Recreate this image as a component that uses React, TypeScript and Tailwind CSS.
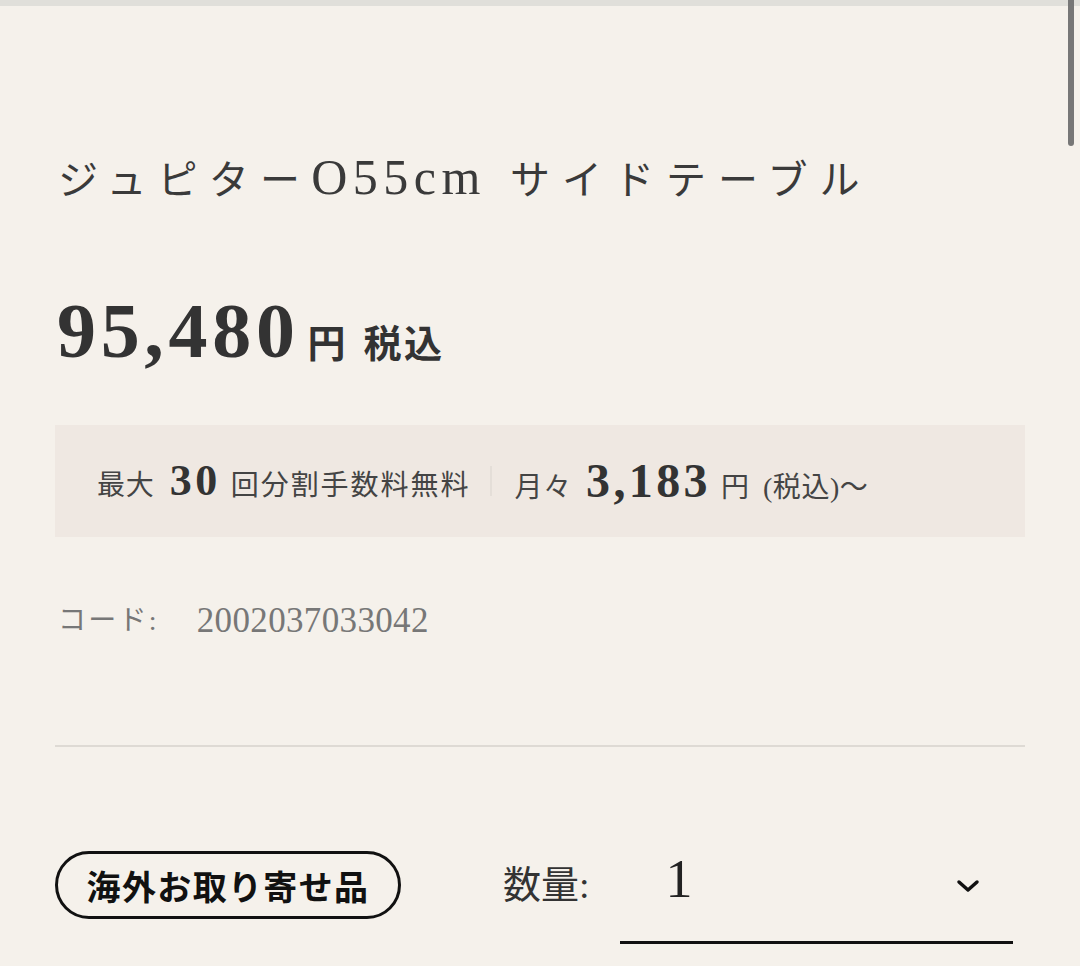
import React from 'react';

const serif = "font-['Liberation_Serif','Noto_Sans_CJK_JP',serif]";

const App: React.FC = () => {
  return (
    <div className="relative w-[1080px] h-[966px] overflow-hidden bg-[#f5f1eb] text-[#333]">
      <div className="h-[6px] bg-[#e0dfda]" />
      {/* scrollbar thumb */}
      <div className="absolute right-[6px] top-0 w-[6px] h-[146px] rounded-b-full bg-[#777]" />

      <div className="px-[55px]">
        <h1 className={`${serif} mt-[143px] ml-[3px] flex items-baseline text-[40px] leading-[56px] text-[#3a3a3a] whitespace-nowrap`}>
          <span className="tracking-[0.28em]">ジュピター</span>
          <span className="text-[50px] tracking-[0.11em]">O55cm</span>
          <span className="ml-[24px] tracking-[0.3em]">サイドテーブル</span>
        </h1>

        <div className={`${serif} mt-[80px] ml-[2px] flex items-baseline text-[#333]`}>
          <span className="text-[78px] leading-[84px] font-bold tracking-[0.06em]">95,480</span>
          <span className="ml-[8px] text-[38px] font-bold">円</span>
          <span className="ml-[18px] text-[38px] font-bold tracking-[0.06em]">税込</span>
        </div>

        <div className={`${serif} mt-[52px] h-[112px] bg-[#efe8e2] flex items-center pl-[42px] text-[#444]`}>
          <div className="flex items-baseline">
            <span className="text-[28px] tracking-[0.03em]">最大</span>
            <span className="ml-[15px] text-[44px] font-bold tracking-[0.08em] text-[#333]">30</span>
            <span className="ml-[10px] text-[28px] tracking-[0.07em]">回分割手数料無料</span>
          </div>
          <div className="ml-[20px] mr-[22px] w-[2px] h-[30px] bg-[#e4ded8]" />
          <div className="flex items-baseline">
            <span className="text-[28px] tracking-[0.03em]">月々</span>
            <span className="ml-[14px] text-[48px] font-bold tracking-[0.07em] text-[#333]">3,183</span>
            <span className="ml-[10px] text-[28px]">円</span>
            <span className="ml-[14px] text-[28px] tracking-[0.02em]">(税込)〜</span>
          </div>
        </div>

        <div className={`${serif} mt-[64px] ml-[3px] flex items-center text-[28px] leading-[40px] text-[#777]`}>
          <span className="tracking-[0.08em]">コード:</span>
          <span className="ml-[38px] text-[35px] tracking-[0.01em]">2002037033042</span>
        </div>

        <div className="mt-[104px] h-[2px] bg-[#dedad4]" />

        <div className="mt-[104px] flex items-start">
          <div className="w-[346px] h-[68px] rounded-full border-[3px] border-[#111] flex items-center justify-center font-['Noto_Sans_CJK_JP',sans-serif] font-bold text-[34px] text-[#111] tracking-[0.04em]">
            海外お取り寄せ品
          </div>
          <div className={`${serif} ml-[102px] mt-[6px] text-[38px] leading-[56px] text-[#333]`}>数量:</div>
          <div className="ml-[30px] w-[393px] h-[93px] border-b-[3px] border-[#111] flex items-start justify-between">
            <span className={`${serif} ml-[46px] -mt-[2px] text-[54px] leading-[60px] text-[#222]`}>1</span>
            <svg className="mr-[32px] mt-[26px]" width="26" height="18" viewBox="0 0 26 18">
              <path d="M4 5 L13 13 L22 5" fill="none" stroke="#111" strokeWidth="3.5" strokeLinecap="round" strokeLinejoin="round" />
            </svg>
          </div>
        </div>
      </div>
    </div>
  );
};

export default App;
